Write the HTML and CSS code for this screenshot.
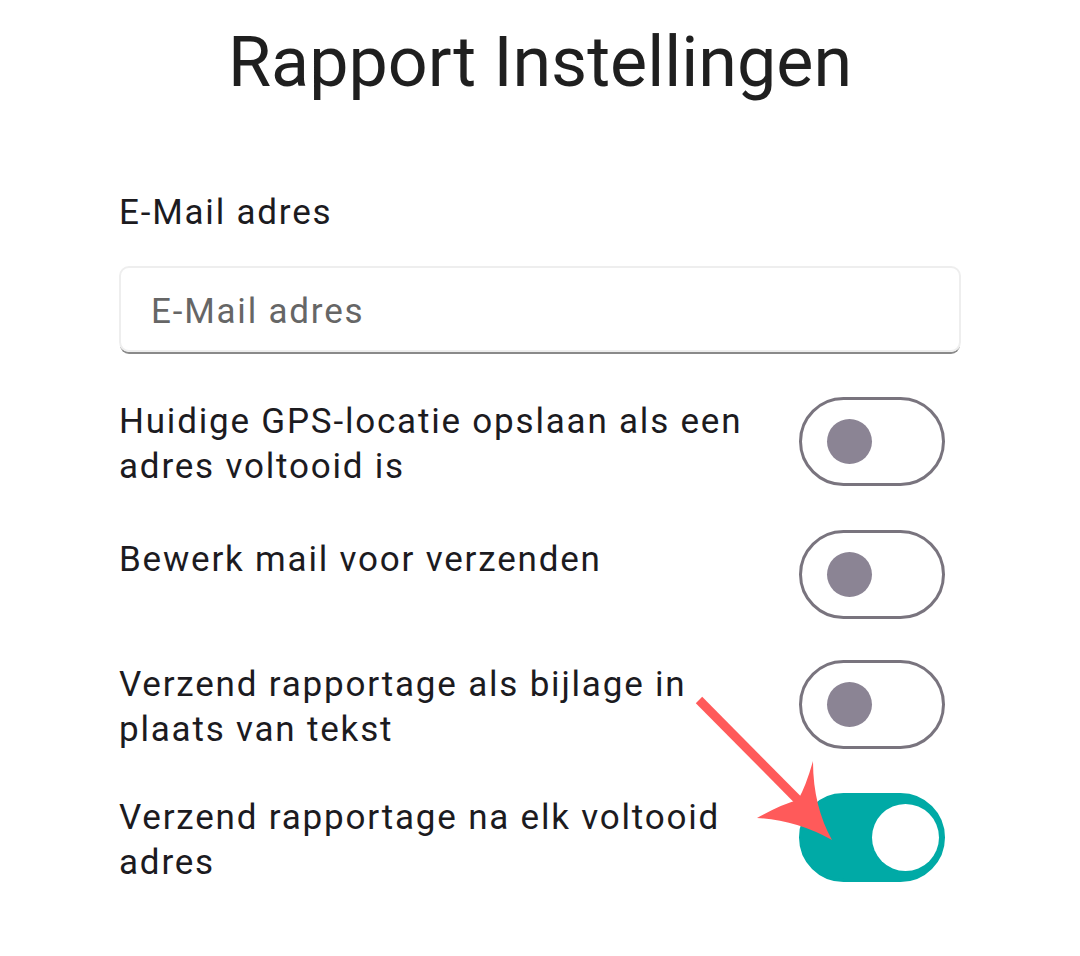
FILE: index.html
```html
<!DOCTYPE html>
<html lang="nl">
<head>
<meta charset="utf-8">
<title>Rapport Instellingen</title>
<link rel="stylesheet" href="styles.css">
</head>
<body>
<main class="page">
  <h1 class="title">Rapport Instellingen</h1>
  <div class="field-label">E-Mail adres</div>
  <div class="input"><span class="placeholder">E-Mail adres</span></div>

  <div class="settings">
    <div class="row">
      <div class="row-text">Huidige GPS-locatie opslaan als een adres voltooid is</div>
      <div class="toggle"><span class="knob"></span></div>
    </div>
    <div class="row">
      <div class="row-text row-text--single">Bewerk mail voor verzenden</div>
      <div class="toggle"><span class="knob"></span></div>
    </div>
    <div class="row">
      <div class="row-text">Verzend rapportage als bijlage in plaats van tekst</div>
      <div class="toggle"><span class="knob"></span></div>
    </div>
    <div class="row">
      <div class="row-text">Verzend rapportage na elk voltooid adres</div>
      <div class="toggle toggle--on"><span class="knob"></span></div>
    </div>
  </div>

  <svg class="arrow" width="1080" height="956" viewBox="0 0 1080 956">
    <line x1="699" y1="700" x2="800" y2="802" stroke="#ff5a5a" stroke-width="9"/>
    <path d="M813,761 Q813,806 832,840 Q796,820 757,818 Q782,804 798,800 Q806,786 813,761 Z" fill="#ff5a5a"/>
  </svg>
</main>
</body>
</html>
```

FILE: styles.css
```css
html, body {
  margin: 0;
  padding: 0;
  background: #ffffff;
}

body {
  font-family: Roboto, "Noto Sans", "Liberation Sans", sans-serif;
  color: #1c1b1f;
}

.page {
  position: relative;
  width: 1080px;
  height: 956px;
  box-sizing: border-box;
  padding: 0 119px;
}

.title {
  margin: 0;
  padding-top: 17px;
  font-size: 70px;
  font-weight: 400;
  line-height: 90px;
  text-align: center;
  color: #1f1f1f;
}

.field-label {
  margin-top: 83px;
  font-size: 35px;
  line-height: 45px;
  letter-spacing: 1.8px;
}

.input {
  margin-top: 31px;
  height: 86px;
  box-sizing: border-box;
  border: 2px solid #eeeeee;
  border-radius: 10px;
  box-shadow: 0 3px 0 -1px #8a8a8a;
  display: flex;
  align-items: center;
  padding: 4px 0 0 30px;
}

.placeholder {
  font-size: 35px;
  letter-spacing: 1.8px;
  color: #666666;
}

.settings {
  margin-top: 45px;
  display: flex;
  flex-direction: column;
  gap: 41px;
}

.row {
  display: flex;
  justify-content: space-between;
  align-items: flex-start;
}

.row-text {
  width: 650px;
  padding-top: 2px;
  font-size: 35px;
  line-height: 45px;
  letter-spacing: 1.8px;
}

.row-text--single {
  padding-top: 7px;
}

.toggle {
  flex: none;
  width: 146px;
  height: 89px;
  margin-right: 16px;
  box-sizing: border-box;
  border: 3px solid #79747e;
  border-radius: 45px;
  display: flex;
  align-items: center;
  padding-left: 25px;
}

.knob {
  width: 45px;
  height: 45px;
  border-radius: 50%;
  background: #8b8494;
}

.toggle--on {
  border-color: #00aaa6;
  background: #00aaa6;
  justify-content: flex-end;
  padding-left: 0;
  padding-right: 3px;
}

.toggle--on .knob {
  width: 67px;
  height: 67px;
  background: #ffffff;
}

.arrow {
  position: absolute;
  left: 0;
  top: 0;
  pointer-events: none;
}
```
